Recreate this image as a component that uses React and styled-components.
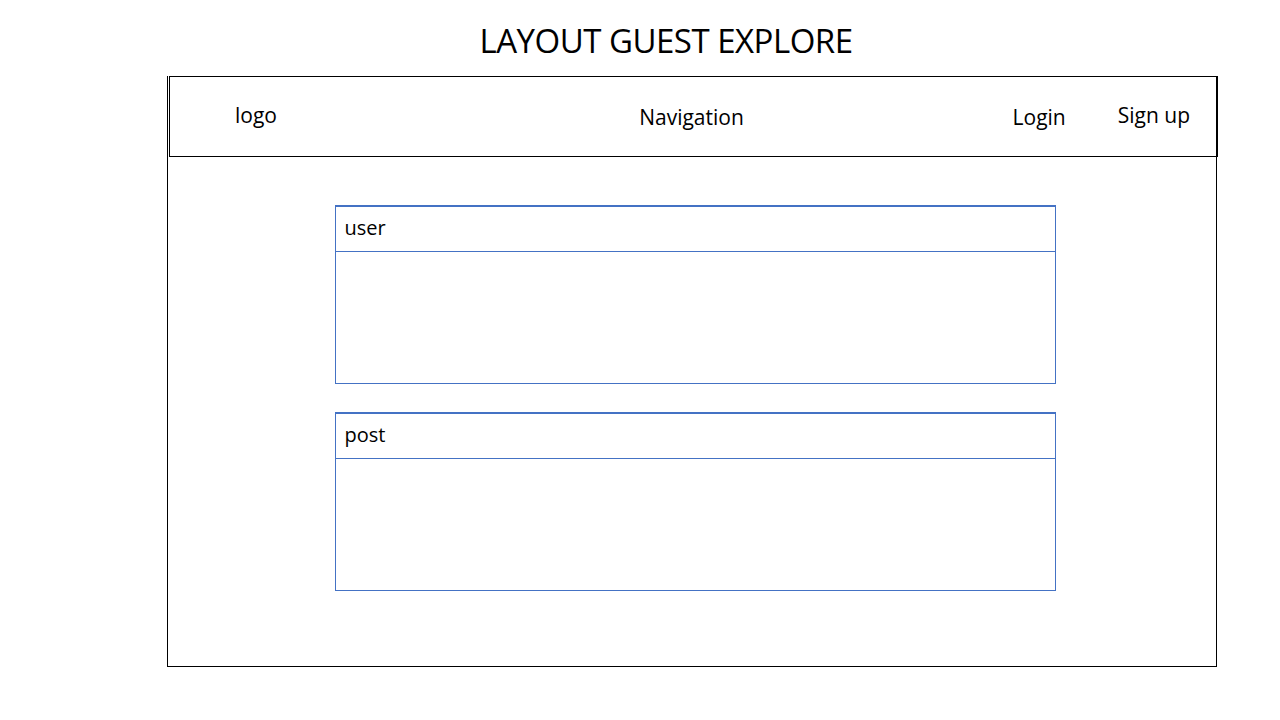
import styled, { createGlobalStyle } from "styled-components";

const Global = createGlobalStyle`
  body {
    margin: 0;
    background: #fff;
    font-family: "Open Sans", "Noto Sans", sans-serif;
    color: #000;
  }
`;

const Page = styled.div`
  width: 1280px;
  height: 720px;
  display: flex;
  flex-direction: column;
`;

const Title = styled.h1`
  margin: 0;
  height: 76px;
  display: flex;
  align-items: center;
  justify-content: center;
  padding-left: 52px;
  padding-top: 4px;
  box-sizing: border-box;
  font-size: 33px;
  font-weight: 400;
  letter-spacing: -0.5px;
`;

const Frame = styled.div`
  margin-left: 167px;
  width: 1050px;
  height: 591px;
  box-sizing: border-box;
  border: 1px solid #000;
  border-top: none;
  display: flex;
  flex-direction: column;
`;

const Header = styled.header`
  margin-left: 1px;
  margin-right: -2px;
  height: 81px;
  box-sizing: border-box;
  border: 1px solid #000;
  display: grid;
  grid-template-columns: 1fr auto 1fr;
  align-items: center;
  font-size: 21px;
`;

const Logo = styled.div`
  padding-left: 65px;
  margin-top: -4px;
`;

const Nav = styled.div`
  margin-left: -4px;
`;

const Actions = styled.div`
  display: flex;
  justify-content: flex-end;
  gap: 52px;
  padding-right: 27px;
`;

const Action = styled.span`
  margin-top: ${(p) => (p.$raised ? "-2px" : "0")};
`;

const Main = styled.main`
  display: flex;
  flex-direction: column;
  align-items: center;
  gap: 28px;
  padding-top: 48px;
  padding-left: 6px;
`;

const Card = styled.section`
  width: 721px;
  height: 179px;
  box-sizing: border-box;
  border: 1px solid #4472c4;
  border-top-width: 2px;
  display: flex;
  flex-direction: column;
`;

const CardHead = styled.div`
  height: 45px;
  box-sizing: border-box;
  border-bottom: 1px solid #4472c4;
  display: flex;
  align-items: center;
  padding-left: 9px;
  padding-bottom: 3px;
  font-size: 20px;
`;

export default function App() {
  return (
    <>
      <Global />
      <Page>
        <Title>LAYOUT GUEST EXPLORE</Title>
        <Frame>
          <Header>
            <Logo>logo</Logo>
            <Nav>Navigation</Nav>
            <Actions>
              <Action>Login</Action>
              <Action $raised>Sign up</Action>
            </Actions>
          </Header>
          <Main>
            <Card>
              <CardHead>user</CardHead>
            </Card>
            <Card>
              <CardHead>post</CardHead>
            </Card>
          </Main>
        </Frame>
      </Page>
    </>
  );
}
